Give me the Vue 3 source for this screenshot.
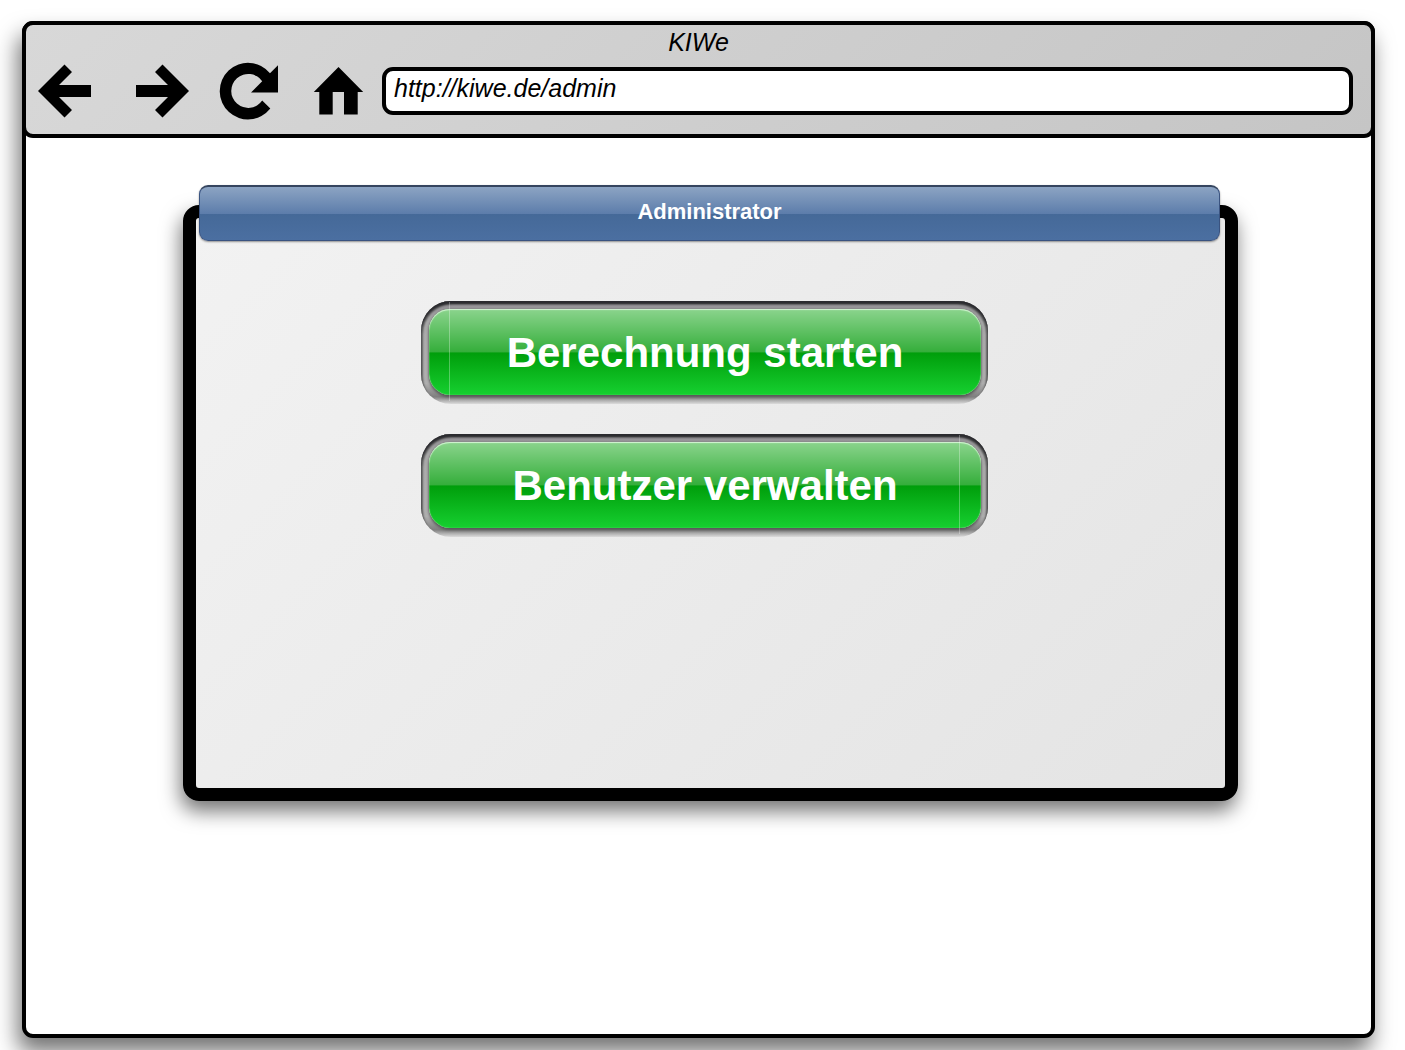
<script setup>
import { ref } from 'vue'

const address = ref('http://kiwe.de/admin')
const actions = [
  { label: 'Berechnung starten', seam: 'seam-left' },
  { label: 'Benutzer verwalten', seam: 'seam-right' },
]
</script>

<template>
  <div class="page">
    <div class="window">
      <header class="chrome">
        <div class="title">KIWe</div>
        <form class="toolbar" @submit.prevent>
          <button type="button" class="tool" aria-label="Zurück">
            <svg width="54" height="54" viewBox="0 0 54 54"><path d="M0 27 26.5 .5 34 8 21 21H53V33H21L34 46 26.5 53.5Z" /></svg>
          </button>
          <button type="button" class="tool" aria-label="Vorwärts">
            <svg width="54" height="54" viewBox="0 0 54 54"><path d="M53 27 26.5 .5 19 8 32 21H0V33H32L19 46 26.5 53.5Z" /></svg>
          </button>
          <button type="button" class="tool" aria-label="Neu laden">
            <svg width="58" height="56" viewBox="0 0 58 56"><path d="M50.3 45.6A28.3 28.3 0 1 1 50 10.3L58 2.3V29.5H31L42.2 18.2A17 17 0 1 0 42.2 37.6Z" /></svg>
          </button>
          <button type="button" class="tool" aria-label="Startseite">
            <svg width="50" height="48" viewBox="0 0 50 48"><path d="M24.5 0 49.2 25H43.7V47.5H30V25H18.7V47.5H5.3V25H-.2Z" /></svg>
          </button>
          <input v-model="address" class="address" type="text" aria-label="Adresse" spellcheck="false">
        </form>
      </header>
      <main class="content">
        <section class="panel">
          <h1 class="panel-title">Administrator</h1>
          <div class="actions">
            <button v-for="a in actions" :key="a.label" type="button" class="action" :class="a.seam">
              <span class="face">{{ a.label }}</span>
            </button>
          </div>
        </section>
      </main>
    </div>
  </div>
</template>

<style>
body {
  margin: 0;
  background: #fff;
}
</style>

<style scoped>
* {
  box-sizing: border-box;
}

.page {
  display: flex;
  min-height: 100vh;
  padding: 21px 30px 12px 22px;
  overflow: hidden;
  font-family: "Liberation Sans", Arial, sans-serif;
  color: #000;
}

.window {
  flex: 1;
  min-width: 0;
  border: 4px solid #000;
  border-radius: 11px;
  background: #fff;
  box-shadow: -4px 14px 22px rgba(0, 0, 0, 0.55);
}

.chrome {
  margin: -4px -4px 0;
  padding: 4px 18px 23px 12px;
  border: 4px solid #000;
  border-radius: 11px;
  background: linear-gradient(135deg, #d8d8d8, #c5c5c5);
}

.title {
  height: 34px;
  padding-left: 6px;
  line-height: 26px;
  text-align: center;
  font-size: 25px;
  font-style: italic;
}

.toolbar {
  display: grid;
  grid-template-columns: 98px 84px 94px 68px 1fr;
  align-items: center;
  height: 48px;
}

.tool {
  display: flex;
  justify-self: start;
  padding: 0;
  border: 0;
  background: none;
  cursor: pointer;
}

.tool svg {
  overflow: visible;
}

.address {
  width: 100%;
  min-width: 0;
  height: 48px;
  padding: 0 8px 6px;
  border: 4px solid #000;
  border-radius: 11px;
  background: #fff;
  font: italic 25px "Liberation Sans", Arial, sans-serif;
  color: #000;
}

.content {
  padding: 67px 133px 48px 157px;
}

.panel {
  border: 13px solid #000;
  border-radius: 16px;
  background: linear-gradient(135deg, #f2f2f2, #e4e4e4);
  box-shadow: -2px 10px 20px rgba(0, 0, 0, 0.55);
}

.panel-title {
  position: relative;
  height: 56px;
  margin: -33px 5px 0 3px;
  border: 1px solid #3a5380;
  border-top: 2px solid #35455f;
  border-radius: 9px;
  background: linear-gradient(#8ca4c3, #5d7dab 50%, #456998 51%, #4b6fa1);
  box-shadow: 0 1px 2px rgba(0, 0, 0, 0.4);
  line-height: 50px;
  text-align: center;
  font-size: 22px;
  font-weight: bold;
  color: #fff;
}

.actions {
  display: flex;
  flex-direction: column;
  align-items: center;
  gap: 30px;
  padding: 60px 12px 251px 0;
}

.action {
  position: relative;
  width: 567px;
  max-width: 100%;
  height: 103px;
  padding: 8px 7px 9px 8px;
  border: 0;
  border-radius: 30px;
  background: linear-gradient(#8f8c91, #aaa 20%, #b0b0b0 80%, #808080 93%, #dcdcdc);
  box-shadow: inset 0 3px 2px #2a2a2e, inset 2px 3px 2px #666, inset -2px 3px 2px #666;
  cursor: pointer;
}

.action::after {
  content: "";
  position: absolute;
  top: 1px;
  bottom: 3px;
  width: 1px;
  background: rgba(255, 255, 255, 0.3);
}

.seam-left::after {
  left: 28px;
}

.seam-right::after {
  right: 28px;
}

.face {
  display: block;
  height: 86px;
  border-radius: 21px;
  background: linear-gradient(#8bd48d, #35ae3b 50%, #009e0b 51%, #16d030);
  box-shadow: inset 0 1px 1px #d4f5d4, inset 0 0 1px #b9e8b9, 0 2px 3px #555, 0 0 2px #777;
  text-align: center;
  white-space: nowrap;
  font: bold 42px/88px "Liberation Sans", Arial, sans-serif;
  color: #fff;
}
</style>
